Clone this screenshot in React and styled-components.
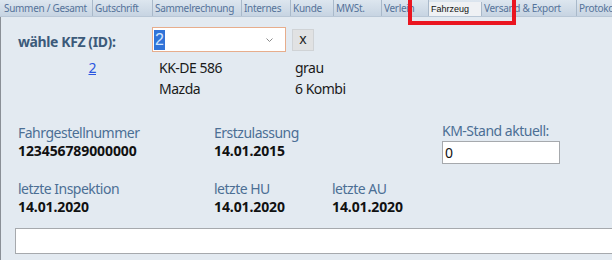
import React from 'react'
import styled, { createGlobalStyle } from 'styled-components'

const GlobalStyle = createGlobalStyle`
  html, body {
    margin: 0;
    padding: 0;
    background: #e3eaf1;
    font-family: "Noto Sans", "Open Sans", sans-serif;
  }
`

const Page = styled.div`
  width: 612px;
  height: 260px;
  overflow: hidden;
  position: relative;
  background: #e3eaf1;
`

// tab strip
const TabBar = styled.div`
  position: relative;
  display: flex;
  height: 17px;
  padding-left: 2px;
  background: linear-gradient(#dde6ef, #c7d4e2);
  border-bottom: 1px solid #b9c7d6;
  box-sizing: border-box;
`

const Tab = styled.div`
  flex: 0 0 ${(props) => props.w}px;
  box-sizing: border-box;
  padding-left: 2px;
  border-right: 1px solid #a9b9ca;
  font-size: 10px;
  line-height: 16px;
  color: #55739a;
  white-space: nowrap;
  overflow: hidden;
  letter-spacing: -0.3px;
`

const ActiveTab = styled.div`
  flex: 0 0 ${(props) => props.w}px;
  box-sizing: border-box;
  margin-top: 2px;
  padding-left: 2px;
  background: #eff1f4;
  border-right: 1px solid #a9b9ca;
  font-family: "Liberation Sans", Arial, sans-serif;
  font-size: 9px;
  line-height: 15px;
  color: #111;
`

const Marker = styled.div`
  position: absolute;
  left: 408px;
  top: -4px;
  width: 108px;
  height: 29px;
  box-sizing: border-box;
  border: 4px solid #ea1520;
  pointer-events: none;
`

// main area
const Content = styled.div`
  height: 243px;
  box-sizing: border-box;
  padding-left: 17px;
  border-left: 1px solid #8a8f96;
`

const PickRow = styled.div`
  display: flex;
  align-items: center;
  padding-top: 10px;
`

const PickLabel = styled.div`
  width: 134px;
  padding-top: 4px;
  font-size: 14px;
  font-weight: 700;
  letter-spacing: -0.4px;
  color: #3c5a7a;
`

const Combo = styled.div`
  display: flex;
  align-items: center;
  width: 134px;
  height: 25px;
  box-sizing: border-box;
  padding: 0 12px 0 1px;
  background: #fff;
  border: 1px solid #e7ad8c;
`

const Selected = styled.span`
  background: #3073d8;
  color: #cfe4ff;
  font-family: "Liberation Sans", Arial, sans-serif;
  font-size: 16px;
  line-height: 20px;
  padding: 0 1px;
`

const Chevron = styled.svg`
  margin-left: auto;
`

const ClearButton = styled.div`
  width: 22px;
  height: 22px;
  margin-left: 6px;
  box-sizing: border-box;
  display: flex;
  align-items: center;
  justify-content: center;
  background: #e1e2e3;
  border: 1px solid #d0d3d6;
  font-size: 14px;
  color: #222;
  padding-bottom: 2px;
`

const InfoGrid = styled.div`
  display: grid;
  grid-template-columns: 78px 63px 136px 1fr;
  margin-top: 5px;
  font-size: 14px;
  line-height: 21px;
  letter-spacing: -0.5px;
  color: #1a1a1a;
`

const IdLink = styled.a`
  justify-self: end;
  color: #2a55e0;
  text-decoration: underline;
  grid-row: 1;
  grid-column: 1;
`

const Cell = styled.div`
  grid-column: ${(props) => props.col};
`

const FieldGrid = styled.div`
  display: grid;
  grid-template-columns: 196px 118px 110px 1fr;
  row-gap: 16px;
  margin-top: 25px;
`

const Field = styled.div`
  grid-column: ${(props) => props.span || 'auto'};
  margin-top: ${(props) => props.lift || 0}px;
`

const Label = styled.div`
  font-size: 14px;
  line-height: 18px;
  letter-spacing: -0.5px;
  color: #4c6f95;
`

const Value = styled.div`
  font-size: 14px;
  font-weight: 700;
  line-height: 18px;
  letter-spacing: -0.1px;
  color: #111;
`

const KmInput = styled.div`
  width: 118px;
  height: 23px;
  margin-top: 1px;
  box-sizing: border-box;
  padding-left: 2px;
  background: #fff;
  border: 1px solid #a6a9ad;
  font-size: 14px;
  line-height: 21px;
  color: #111;
`

const NoteInput = styled.div`
  height: 26px;
  margin: 12px -20px 0 -3px;
  box-sizing: border-box;
  background: #fff;
  border: 1px solid #a6a9ad;
`

const tabs = [
  ['Summen / Gesamt', 91],
  ['Gutschrift', 60],
  ['Sammelrechnung', 89],
  ['Internes', 49],
  ['Kunde', 43],
  ['MWSt.', 48],
  ['Verleih', 47],
]

const App = () => {
  return (
    <Page>
      <GlobalStyle />
      <TabBar>
        {tabs.map(([name, w]) => (
          <Tab key={name} w={w}>{name}</Tab>
        ))}
        <ActiveTab w={53}>Fahrzeug</ActiveTab>
        <Tab w={95}>Versand &amp; Export</Tab>
        <Tab w={60}>Protokoll</Tab>
        <Marker />
      </TabBar>
      <Content>
        <PickRow>
          <PickLabel>wähle KFZ (ID):</PickLabel>
          <Combo>
            <Selected>2</Selected>
            <Chevron width="7" height="4" viewBox="0 0 7 4">
              <polyline points="0.5,0.5 3.5,3.5 6.5,0.5" fill="none" stroke="#8a8a8a" strokeWidth="1" />
            </Chevron>
          </Combo>
          <ClearButton>x</ClearButton>
        </PickRow>
        <InfoGrid>
          <IdLink href="#">2</IdLink>
          <Cell col={3}>KK-DE 586</Cell>
          <Cell col={4}>grau</Cell>
          <Cell col={3}>Mazda</Cell>
          <Cell col={4}>6 Kombi</Cell>
        </InfoGrid>
        <FieldGrid>
          <Field>
            <Label>Fahrgestellnummer</Label>
            <Value>123456789000000</Value>
          </Field>
          <Field span="2 / span 2">
            <Label>Erstzulassung</Label>
            <Value>14.01.2015</Value>
          </Field>
          <Field lift={-2}>
            <Label>KM-Stand aktuell:</Label>
            <KmInput>0</KmInput>
          </Field>
          <Field>
            <Label>letzte Inspektion</Label>
            <Value>14.01.2020</Value>
          </Field>
          <Field>
            <Label>letzte HU</Label>
            <Value>14.01.2020</Value>
          </Field>
          <Field>
            <Label>letzte AU</Label>
            <Value>14.01.2020</Value>
          </Field>
        </FieldGrid>
        <NoteInput />
      </Content>
    </Page>
  )
}

export default App
